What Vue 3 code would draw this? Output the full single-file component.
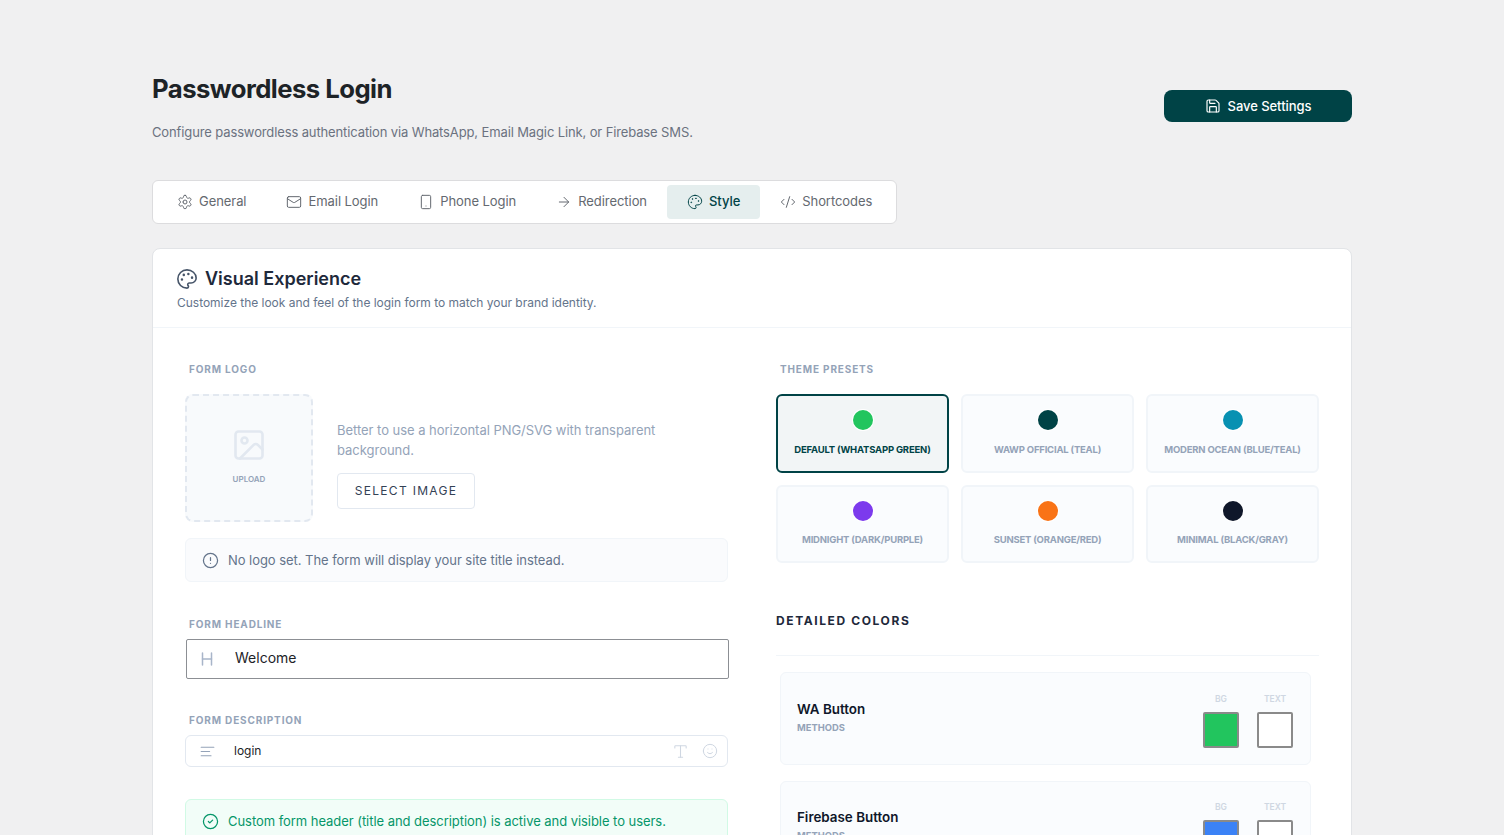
<script setup>
import { h } from 'vue'

const circle = (cx, cy, r) => `M${cx - r} ${cy}a${r} ${r} 0 1 0 ${r * 2} 0a${r} ${r} 0 1 0-${r * 2} 0`

const paths = {
  gear: ['M12.22 2h-.44a2 2 0 0 0-2 2v.18a2 2 0 0 1-1 1.73l-.43.25a2 2 0 0 1-2 0l-.15-.08a2 2 0 0 0-2.73.73l-.22.38a2 2 0 0 0 .73 2.73l.15.1a2 2 0 0 1 1 1.72v.51a2 2 0 0 1-1 1.74l-.15.09a2 2 0 0 0-.73 2.73l.22.38a2 2 0 0 0 2.73.73l.15-.08a2 2 0 0 1 2 0l.43.25a2 2 0 0 1 1 1.73V20a2 2 0 0 0 2 2h.44a2 2 0 0 0 2-2v-.18a2 2 0 0 1 1-1.73l.43-.25a2 2 0 0 1 2 0l.15.08a2 2 0 0 0 2.73-.73l.22-.39a2 2 0 0 0-.73-2.73l-.15-.08a2 2 0 0 1-1-1.74v-.5a2 2 0 0 1 1-1.74l.15-.09a2 2 0 0 0 .73-2.73l-.22-.38a2 2 0 0 0-2.73-.73l-.15.08a2 2 0 0 1-2 0l-.43-.25a2 2 0 0 1-1-1.73V4a2 2 0 0 0-2-2z', circle(12, 12, 3)],
  mail: ['M4 4h16a2 2 0 0 1 2 2v12a2 2 0 0 1-2 2H4a2 2 0 0 1-2-2V6a2 2 0 0 1 2-2z', 'm22 7-8.97 5.7a1.94 1.94 0 0 1-2.06 0L2 7'],
  phone: ['M7 2h10a2 2 0 0 1 2 2v16a2 2 0 0 1-2 2H7a2 2 0 0 1-2-2V4a2 2 0 0 1 2-2z', 'M12 18h.01'],
  arrow: ['M5 12h14', 'm12 5 7 7-7 7'],
  palette: ['M12 2C6.5 2 2 6.5 2 12s4.5 10 10 10c.926 0 1.648-.746 1.648-1.688 0-.437-.18-.835-.437-1.125-.29-.289-.438-.652-.438-1.125a1.64 1.64 0 0 1 1.668-1.668h1.996c3.051 0 5.555-2.503 5.555-5.554C21.965 6.012 17.461 2 12 2z', circle(13.5, 6.5, 0.5), circle(17.5, 10.5, 0.5), circle(8.5, 7.5, 0.5), circle(6.5, 12.5, 0.5)],
  code: ['m18 16 4-4-4-4', 'm6 8-4 4 4 4', 'm14.5 4-5 16'],
  save: ['M15.2 3a2 2 0 0 1 1.4.6l3.8 3.8a2 2 0 0 1 .6 1.4V19a2 2 0 0 1-2 2H5a2 2 0 0 1-2-2V5a2 2 0 0 1 2-2z', 'M17 21v-7a1 1 0 0 0-1-1H8a1 1 0 0 0-1 1v7', 'M7 3v4a1 1 0 0 0 1 1h7'],
  image: ['M5 3h14a2 2 0 0 1 2 2v14a2 2 0 0 1-2 2H5a2 2 0 0 1-2-2V5a2 2 0 0 1 2-2z', circle(9, 9, 2), 'm21 15-3.086-3.086a2 2 0 0 0-2.828 0L6 21'],
  alert: [circle(12, 12, 10), 'M12 8v4', 'M12 16h.01'],
  heading: ['M6 12h12', 'M6 20V4', 'M18 20V4'],
  lines: ['M21 6H3', 'M15 12H3', 'M17 18H3'],
  type: ['M12 4v16', 'M4 7V5a1 1 0 0 1 1-1h14a1 1 0 0 1 1 1v2', 'M9 20h6'],
  smile: [circle(12, 12, 10), 'M8 14s1.5 2 4 2 4-2 4-2', 'M9 9h.01', 'M15 9h.01'],
  check: [circle(12, 12, 10), 'm9 12 2 2 4-4'],
}

// small inline svg icon, stroke comes from the css color
const Icon = (props) =>
  h('svg', {
    viewBox: '0 0 24 24',
    width: props.size,
    height: props.size,
    fill: 'none',
    stroke: 'currentColor',
    'stroke-width': props.stroke || 2,
    'stroke-linecap': 'round',
    'stroke-linejoin': 'round',
  }, paths[props.name].map((d) => h('path', { d })))
Icon.props = ['name', 'size', 'stroke']

const tabs = [
  { label: 'General', icon: 'gear' },
  { label: 'Email Login', icon: 'mail' },
  { label: 'Phone Login', icon: 'phone' },
  { label: 'Redirection', icon: 'arrow' },
  { label: 'Style', icon: 'palette', active: true },
  { label: 'Shortcodes', icon: 'code' },
]

const presets = [
  { label: 'Default (WhatsApp Green)', color: '#22c55e', active: true },
  { label: 'WAWP Official (Teal)', color: '#004346' },
  { label: 'Modern Ocean (Blue/Teal)', color: '#0891b2' },
  { label: 'Midnight (Dark/Purple)', color: '#7c3aed' },
  { label: 'Sunset (Orange/Red)', color: '#f97316' },
  { label: 'Minimal (Black/Gray)', color: '#0f172a' },
]

const colorRows = [
  { name: 'WA Button', bg: '#22c55e' },
  { name: 'Firebase Button', bg: '#3b82f6' },
]
</script>

<template>
  <main class="page">
    <header class="top">
      <div>
        <h1>Passwordless Login</h1>
        <p class="subtitle">Configure passwordless authentication via WhatsApp, Email Magic Link, or Firebase SMS.</p>
      </div>
      <button class="save" type="button">
        <Icon name="save" :size="16" :stroke="1.75" />
        Save Settings
      </button>
    </header>

    <nav class="tabs">
      <a v-for="tab in tabs" :key="tab.label" class="tab" :class="{ active: tab.active }">
        <Icon :name="tab.icon" :size="16" :stroke="1.5" />
        <span>{{ tab.label }}</span>
      </a>
    </nav>

    <section class="card">
      <div class="card-head">
        <h2><Icon name="palette" :size="22" :stroke="1.75" /> Visual Experience</h2>
        <p>Customize the look and feel of the login form to match your brand identity.</p>
      </div>

      <div class="card-body">
        <div class="col">
          <label class="field-label">Form Logo</label>
          <div class="logo-row">
            <div class="logo-box">
              <Icon name="image" :size="36" :stroke="1.75" />
              <span>Upload</span>
            </div>
            <div class="logo-info">
              <p>Better to use a horizontal PNG/SVG with transparent background.</p>
              <button class="select" type="button">Select Image</button>
            </div>
          </div>
          <div class="note">
            <Icon name="alert" :size="17" :stroke="1.75" />
            No logo set. The form will display your site title instead.
          </div>

          <label class="field-label headline-label">Form Headline</label>
          <div class="headline">
            <Icon name="heading" :size="18" :stroke="2" />
            <input type="text" value="Welcome" />
          </div>

          <label class="field-label desc-label">Form Description</label>
          <div class="desc">
            <Icon name="lines" :size="17" :stroke="1.5" />
            <input type="text" value="login" />
            <Icon class="faint" name="type" :size="17" :stroke="1.5" />
            <Icon class="faint" name="smile" :size="16" :stroke="1.5" />
          </div>

          <div class="success">
            <Icon name="check" :size="17" :stroke="1.75" />
            Custom form header (title and description) is active and visible to users.
          </div>
        </div>

        <div class="col">
          <label class="field-label">Theme Presets</label>
          <div class="presets">
            <button v-for="p in presets" :key="p.label" class="preset" :class="{ active: p.active }" type="button">
              <span class="dot" :style="{ background: p.color }"></span>
              <span class="preset-name">{{ p.label }}</span>
            </button>
          </div>

          <h3 class="detail-title">Detailed Colors</h3>
          <div v-for="row in colorRows" :key="row.name" class="color-row">
            <div class="row-text">
              <div class="row-name">{{ row.name }}</div>
              <div class="row-sub">Methods</div>
            </div>
            <div class="swatches">
              <div class="swatch-wrap">
                <span>BG</span>
                <div class="swatch" :style="{ background: row.bg }"></div>
              </div>
              <div class="swatch-wrap">
                <span>Text</span>
                <div class="swatch"></div>
              </div>
            </div>
          </div>
        </div>
      </div>
    </section>
  </main>
</template>

<style>
html, body {
  height: 100%;
  overflow: hidden;
  background: #f0f0f1;
}
</style>

<style scoped>
.page {
  width: 1200px;
  margin: 0 auto;
  padding-top: 72px;
  font-family: Inter, "Liberation Sans", sans-serif;
  color: #1e293b;
}
.top {
  display: flex;
  justify-content: space-between;
  align-items: center;
  height: 68px;
}
h1 {
  margin: 1px 0 0;
  font-size: 25.7px;
  line-height: 34px;
  font-weight: 700;
  letter-spacing: -0.55px;
  color: #1d2327;
}
.subtitle {
  margin: 16px 0 0;
  font-size: 13px;
  line-height: 20px;
  color: #6b7280;
  letter-spacing: -0.125px;
}
.save {
  display: flex;
  align-items: center;
  justify-content: center;
  gap: 7px;
  width: 188px;
  height: 32px;
  border: 0;
  border-radius: 8px;
  background: #004346;
  color: #fff;
  font: 500 13px Inter, sans-serif;
  letter-spacing: -0.05px;
}

.tabs {
  display: inline-flex;
  margin-top: 40px;
  padding: 4px;
  background: #fff;
  border: 1px solid #dcdcde;
  border-radius: 6px;
}
.tab {
  display: flex;
  align-items: center;
  gap: 6px;
  height: 34px;
  padding: 0 20px;
  border-radius: 4px;
  font-size: 13px;
  letter-spacing: -0.06px;
  color: #646970;
}
.tab span {
  margin-bottom: 2px;
}
.tab.active {
  background: #e5eeee;
  color: #004346;
  font-weight: 500;
}

.card {
  margin-top: 24px;
  background: #fff;
  border: 1px solid #e2e4e7;
  border-radius: 8px;
}
.card-head {
  height: 79px;
  padding: 18px 24px 0;
  border-bottom: 1px solid #f1f5f9;
  box-sizing: border-box;
}
.card-head h2 {
  display: flex;
  align-items: center;
  gap: 7px;
  margin: 0 0 0 -1px;
  font-size: 18px;
  line-height: 24px;
  font-weight: 600;
}
.card-head h2 svg {
  color: #475569;
}
.card-head p {
  margin: 3px 0 0;
  font-size: 12px;
  line-height: 18px;
  letter-spacing: -0.02px;
  color: #64748b;
}
.card-body {
  display: grid;
  grid-template-columns: 1fr 1fr;
  gap: 48px;
  padding: 33px 32px 32px;
}
.col {
  min-width: 0;
}

.field-label {
  display: block;
  padding-left: 4px;
  font-size: 10px;
  line-height: 16px;
  font-weight: 700;
  letter-spacing: 0.85px;
  text-transform: uppercase;
  color: #94a3b8;
}
.logo-row {
  display: flex;
  align-items: flex-start;
  gap: 24px;
  margin-top: 17px;
}
.logo-box {
  flex: none;
  display: flex;
  flex-direction: column;
  align-items: center;
  justify-content: center;
  gap: 11px;
  width: 128px;
  height: 128px;
  padding-bottom: 5px;
  box-sizing: border-box;
  border: 2px dashed #e2e8f0;
  border-radius: 8px;
  background: #f8fafc;
  color: #e2e8f0;
}
.logo-box span {
  font-size: 8px;
  line-height: 10px;
  font-weight: 600;
  text-transform: uppercase;
  color: #94a3b8;
}
.logo-info {
  max-width: 330px;
  padding-top: 26px;
}
.logo-info p {
  margin: 0 0 13px;
  font-size: 13px;
  line-height: 20px;
  letter-spacing: -0.03px;
  color: #94a3b8;
}
.select {
  display: block;
  width: 138px;
  height: 36px;
  padding-bottom: 2px;
  background: #fff;
  border: 1px solid #e2e8f0;
  border-radius: 4px;
  font: 400 12px Inter, sans-serif;
  letter-spacing: 1.3px;
  text-transform: uppercase;
  color: #334155;
}
.note {
  display: flex;
  align-items: center;
  gap: 9px;
  height: 44px;
  margin-top: 16px;
  padding: 0 16px;
  box-sizing: border-box;
  background: #fafbfd;
  border: 1px solid #f1f5f9;
  border-radius: 6px;
  font-size: 13px;
  letter-spacing: -0.05px;
  color: #64748b;
}

.headline-label {
  margin-top: 34px;
}
.headline {
  display: flex;
  align-items: center;
  gap: 19px;
  height: 40px;
  margin: 7px -1px 0 1px;
  padding: 0 11px;
  box-sizing: border-box;
  border: 1px solid #8c8f94;
  border-radius: 2px;
  color: #a8b5c9;
}
.headline input,
.desc input {
  flex: 1;
  min-width: 0;
  border: 0;
  outline: 0;
  padding: 0;
  background: transparent;
  font-family: inherit;
  color: #1d2327;
}
.headline input {
  padding-bottom: 3px;
  font-size: 14px;
}
.desc-label {
  margin-top: 33px;
}
.desc {
  display: flex;
  align-items: center;
  gap: 13px;
  height: 32px;
  margin-top: 7px;
  padding: 0 9px 0 13px;
  box-sizing: border-box;
  border: 1px solid #e2e8f0;
  border-radius: 6px;
  color: #94a3b8;
}
.desc input {
  margin-left: 5px;
  padding-bottom: 2px;
  font-size: 12px;
}
.desc .faint {
  color: #cfd7e2;
}
.success {
  display: flex;
  align-items: center;
  gap: 9px;
  height: 44px;
  margin-top: 32px;
  padding: 0 16px;
  box-sizing: border-box;
  background: #f2fdf8;
  border: 1px solid #d1fae5;
  border-radius: 6px;
  font-size: 13px;
  letter-spacing: -0.05px;
  color: #059669;
}

.presets {
  display: grid;
  grid-template-columns: repeat(3, 1fr);
  gap: 12px;
  margin-top: 17px;
}
.preset {
  display: flex;
  flex-direction: column;
  align-items: center;
  height: 78.5px;
  padding: 14px 0 0;
  box-sizing: border-box;
  background: #fafcfe;
  border: 2px solid #f1f5f9;
  border-radius: 6px;
}
.preset.active {
  background: #f2f5f6;
  border-color: #004346;
}
.dot {
  width: 20px;
  height: 20px;
  border-radius: 50%;
  box-shadow: 0 0 0 1px #fff;
}
.preset-name {
  margin-top: 13.5px;
  font-family: Inter, sans-serif;
  font-size: 9.5px;
  line-height: 12px;
  font-weight: 700;
  letter-spacing: -0.2px;
  text-transform: uppercase;
  color: #94a3b8;
}
.preset.active .preset-name {
  color: #004346;
}

.detail-title {
  margin: 50px 0 0;
  padding-bottom: 26px;
  border-bottom: 1px solid #f1f5f9;
  font-size: 12px;
  line-height: 16px;
  font-weight: 700;
  letter-spacing: 1.6px;
  text-transform: uppercase;
  color: #1e293b;
}
.color-row {
  display: flex;
  justify-content: space-between;
  align-items: center;
  height: 92.5px;
  margin: 16px 8px 0 4px;
  padding: 0 17px 0 16px;
  box-sizing: border-box;
  background: #fafcfe;
  border: 1px solid #f1f5f9;
  border-radius: 6px;
}
.row-text {
  padding-bottom: 2px;
}
.row-name {
  font-size: 13.4px;
  line-height: 18px;
  font-weight: 600;
  color: #0f172a;
}
.row-sub {
  margin-top: 3px;
  font-size: 9.4px;
  line-height: 14px;
  font-weight: 700;
  text-transform: uppercase;
  color: #94a3b8;
}
.swatches {
  display: flex;
  gap: 18px;
  padding-top: 4px;
}
.swatch-wrap {
  display: flex;
  flex-direction: column;
  align-items: center;
  gap: 7px;
}
.swatch-wrap span {
  font-size: 8.5px;
  line-height: 12px;
  font-weight: 600;
  text-transform: uppercase;
  color: #cfd7e2;
}
.swatch {
  width: 36px;
  height: 36px;
  box-sizing: border-box;
  background: #fff;
  border: 2px solid #8a8a8a;
  border-radius: 2px;
}
</style>
